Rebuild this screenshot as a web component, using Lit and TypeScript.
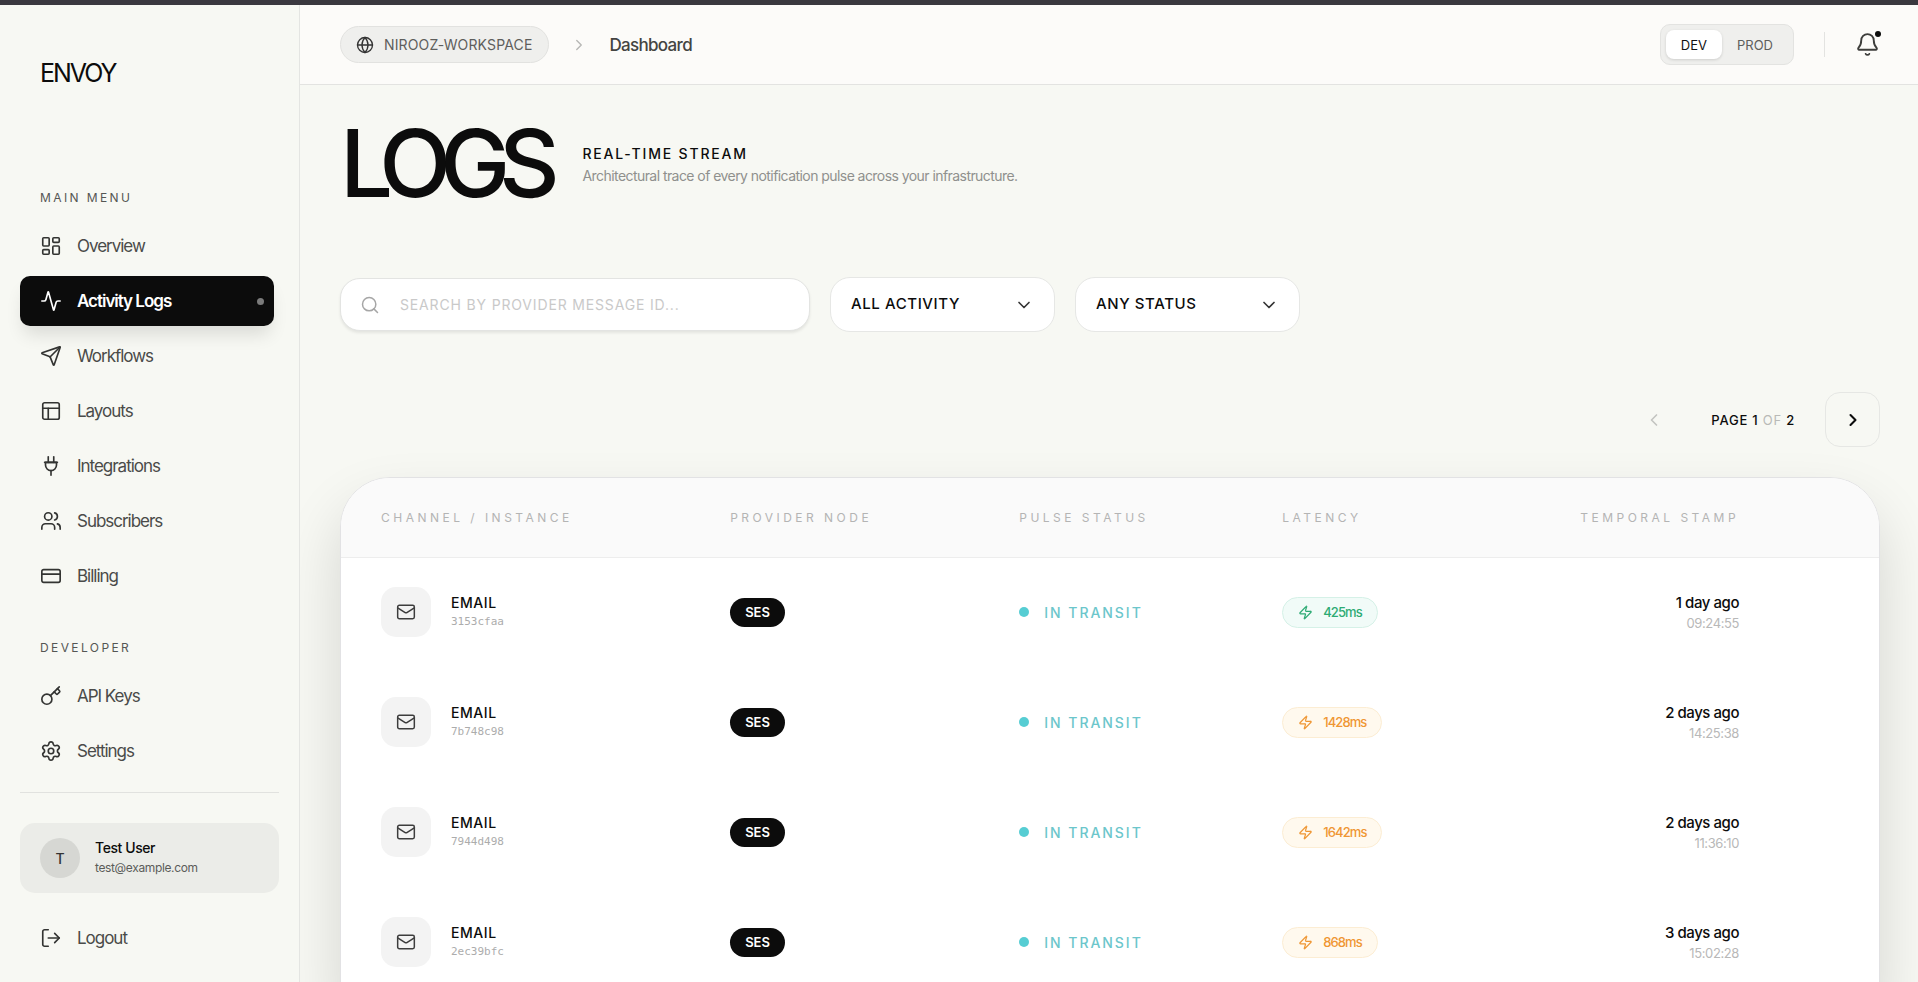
import { LitElement, html, css, svg, type SVGTemplateResult } from "lit";
import { customElement, property, state } from "lit/decorators.js";
import { classMap } from "lit/directives/class-map.js";

const ICONS: Record<string, SVGTemplateResult> = {
  overview: svg`<rect width="7" height="9" x="3" y="3" rx="1"/><rect width="7" height="5" x="14" y="3" rx="1"/><rect width="7" height="9" x="14" y="12" rx="1"/><rect width="7" height="5" x="3" y="16" rx="1"/>`,
  activity: svg`<path d="M22 12h-2.48a2 2 0 0 0-1.93 1.46l-2.35 8.36a.25.25 0 0 1-.48 0L9.24 2.18a.25.25 0 0 0-.48 0l-2.35 8.36A2 2 0 0 1 4.49 12H2"/>`,
  send: svg`<path d="M14.536 21.686a.5.5 0 0 0 .937-.024l6.5-19a.496.496 0 0 0-.635-.635l-19 6.5a.5.5 0 0 0-.024.937l7.93 3.18a2 2 0 0 1 1.112 1.11z"/><path d="m21.854 2.147-10.94 10.939"/>`,
  layout: svg`<rect width="18" height="18" x="3" y="3" rx="2"/><path d="M3 9h18"/><path d="M9 21V9"/>`,
  plug: svg`<path d="M9 2v6"/><path d="M15 2v6"/><path d="M12 17v5"/><path d="M5 8h14"/><path d="M6 11V8h12v3a6 6 0 1 1-12 0Z"/>`,
  users: svg`<path d="M16 21v-2a4 4 0 0 0-4-4H6a4 4 0 0 0-4 4v2"/><path d="M16 3.128a4 4 0 0 1 0 7.744"/><path d="M22 21v-2a4 4 0 0 0-3-3.87"/><circle cx="9" cy="7" r="4"/>`,
  card: svg`<rect width="20" height="14" x="2" y="5" rx="2"/><path d="M2 10h20"/>`,
  key: svg`<path d="m15.5 7.5 2.3 2.3a1 1 0 0 0 1.4 0l2.1-2.1a1 1 0 0 0 0-1.4L19 4"/><path d="m21 2-9.6 9.6"/><circle cx="7.5" cy="15.5" r="5.5"/>`,
  settings: svg`<path d="M9.671 4.136a2.34 2.34 0 0 1 4.659 0 2.34 2.34 0 0 0 3.319 1.915 2.34 2.34 0 0 1 2.33 4.033 2.34 2.34 0 0 0 0 3.831 2.34 2.34 0 0 1-2.33 4.033 2.34 2.34 0 0 0-3.319 1.915 2.34 2.34 0 0 1-4.659 0 2.34 2.34 0 0 0-3.32-1.915 2.34 2.34 0 0 1-2.33-4.033 2.34 2.34 0 0 0 0-3.831A2.34 2.34 0 0 1 6.35 6.051a2.34 2.34 0 0 0 3.319-1.915"/><circle cx="12" cy="12" r="3"/>`,
  logout: svg`<path d="m16 17 5-5-5-5"/><path d="M21 12H9"/><path d="M9 21H5a2 2 0 0 1-2-2V5a2 2 0 0 1 2-2h4"/>`,
  globe: svg`<circle cx="12" cy="12" r="10"/><path d="M12 2a14.5 14.5 0 0 0 0 20 14.5 14.5 0 0 0 0-20"/><path d="M2 12h20"/>`,
  search: svg`<path d="m21 21-4.34-4.34"/><circle cx="11" cy="11" r="8"/>`,
  bell: svg`<path d="M10.268 21a2 2 0 0 0 3.464 0"/><path d="M3.262 15.326A1 1 0 0 0 4 17h16a1 1 0 0 0 .74-1.673C19.41 13.956 18 12.499 18 8A6 6 0 0 0 6 8c0 4.499-1.411 5.956-2.738 7.326"/>`,
  mail: svg`<path d="m22 7-8.991 5.727a2 2 0 0 1-2.009 0L2 7"/><rect x="2" y="4" width="20" height="16" rx="2"/>`,
  zap: svg`<path d="M4 14a1 1 0 0 1-.78-1.63l9.9-10.2a.5.5 0 0 1 .86.46l-1.92 6.02A1 1 0 0 0 13 10h7a1 1 0 0 1 .78 1.63l-9.9 10.2a.5.5 0 0 1-.86-.46l1.92-6.02A1 1 0 0 0 11 14z"/>`,
  left: svg`<path d="m15 18-6-6 6-6"/>`,
  right: svg`<path d="m9 18 6-6-6-6"/>`,
  down: svg`<path d="m6 9 6 6 6-6"/>`,
};

@customElement("ui-icon")
export class UiIcon extends LitElement {
  @property() name = "";
  @property({ type: Number }) size = 22;
  @property({ type: Number }) weight = 1.8;

  static styles = css`
    :host { display: inline-flex; flex: none; }
    svg { display: block; fill: none; stroke: currentColor; stroke-linecap: round; stroke-linejoin: round; }
  `;

  render() {
    return html`<svg viewBox="0 0 24 24" width=${this.size} height=${this.size}
      stroke-width=${this.weight} aria-hidden="true">${ICONS[this.name]}</svg>`;
  }
}

const MAIN_MENU = [
  ["Overview", "overview"],
  ["Activity Logs", "activity"],
  ["Workflows", "send"],
  ["Layouts", "layout"],
  ["Integrations", "plug"],
  ["Subscribers", "users"],
  ["Billing", "card"],
];

const DEV_MENU = [
  ["API Keys", "key"],
  ["Settings", "settings"],
];

@customElement("side-bar")
export class SideBar extends LitElement {
  static styles = css`
    :host {
      display: flex; flex-direction: column; box-sizing: border-box;
      padding: 50px 20px 19px; border-right: 1px solid #e4e5e2; background: #f7f8f3;
    }
    a { color: inherit; text-decoration: none; }
    ul { list-style: none; margin: 0; padding: 0; }
    .brand {
      padding-left: 20px; font-size: 25px; line-height: 36px;
      letter-spacing: -0.08em; color: #0c0c0c;
    }
    nav { flex: 1; padding-right: 5px; }
    .label {
      margin: 0 0 15px; padding-left: 20px; font-size: 12px; line-height: 16px;
      font-weight: 400; letter-spacing: 0.2em; color: #555654;
    }
    .main { margin-top: 99px; }
    .dev { margin-top: 39px; }
    .menu { display: flex; flex-direction: column; gap: 5px; }
    .item {
      display: flex; align-items: center; gap: 15px; height: 50px; padding: 0 10px 0 20px;
      border-radius: 10px; font-size: 17px; letter-spacing: -0.06em; color: #4a4b49;
    }
    .item ui-icon { color: #333432; }
    .active {
      background: #0c0c0c; color: #fff; font-weight: 600;
      box-shadow: 0 12px 18px -4px rgba(0, 0, 0, 0.12);
    }
    .active ui-icon { color: #fff; }
    .dot { width: 7px; height: 7px; margin-left: auto; border-radius: 50%; background: #7b7b7b; }
    .foot { border-top: 1px solid #e1e2df; padding-top: 30px; }
    .user {
      display: flex; align-items: center; gap: 15px; height: 70px; padding: 0 20px;
      margin-bottom: 20px; border-radius: 15px; background: #ebece8;
    }
    .avatar {
      display: grid; place-items: center; width: 40px; height: 40px; flex: none;
      border-radius: 50%; background: #d6d7d3; font-size: 14px; font-weight: 500; color: #333;
    }
    .name { font-size: 14px; line-height: 20px; font-weight: 500; letter-spacing: -0.03em; color: #0c0c0c; }
    .mail { font-size: 12px; line-height: 20px; letter-spacing: -0.03em; color: #5b5c5a; }
  `;

  private items(list: string[][]) {
    return html`<ul class="menu">${list.map(([text, icon]) => {
      const active = text === "Activity Logs";
      return html`<li><a href="#" class=${classMap({ item: true, active })}>
        <ui-icon name=${icon}></ui-icon><span>${text}</span>
        ${active ? html`<span class="dot"></span>` : null}
      </a></li>`;
    })}</ul>`;
  }

  render() {
    return html`
      <a class="brand" href="#">ENVOY</a>
      <nav>
        <h2 class="label main">MAIN MENU</h2>
        ${this.items(MAIN_MENU)}
        <h2 class="label dev">DEVELOPER</h2>
        ${this.items(DEV_MENU)}
      </nav>
      <div class="foot">
        <div class="user">
          <span class="avatar">T</span>
          <div>
            <div class="name">Test User</div>
            <div class="mail">test@example.com</div>
          </div>
        </div>
        <a class="item" href="#"><ui-icon name="logout"></ui-icon><span>Logout</span></a>
      </div>
    `;
  }
}

@customElement("top-bar")
export class TopBar extends LitElement {
  @state() private env = "DEV";

  static styles = css`
    :host {
      display: flex; align-items: center; justify-content: space-between; box-sizing: border-box;
      height: 80px; padding: 0 38px 0 40px; border-bottom: 1px solid #e3e3e1; background: #fcfbf9;
    }
    button { font: inherit; border: 0; background: none; padding: 0; cursor: pointer; }
    a { text-decoration: none; }
    .crumbs, .tools { display: flex; align-items: center; }
    .space {
      display: flex; align-items: center; gap: 10px; height: 37px; box-sizing: border-box;
      padding: 0 16px 0 15px; border: 1px solid #e2e2e0; border-radius: 19px; background: #efefed;
      font-size: 14px; letter-spacing: 0.01em; color: #5e5e5c;
    }
    .space ui-icon { color: #333; }
    .sep { margin: 0 21px; color: #b7b7b5; }
    .here { font-size: 17px; font-weight: 500; letter-spacing: -0.04em; color: #444442; }
    .env {
      display: flex; box-sizing: border-box; height: 41px; padding: 5px;
      border: 1px solid #e3e3e1; border-radius: 10px; background: #efefed;
    }
    .env button { padding: 0 15px; border-radius: 8px; font-size: 13px; color: #5e5e5c; }
    .env .on { background: #fff; color: #111; box-shadow: 0 1px 3px rgba(0, 0, 0, 0.14); }
    .line { width: 1px; height: 25px; margin: 0 30px; background: #e3e3e1; }
    .bell { position: relative; display: flex; color: #3d3d3b; }
    .ping { position: absolute; top: -1px; right: -1px; width: 6px; height: 6px; border-radius: 50%; background: #0c0c0c; }
  `;

  render() {
    return html`
      <div class="crumbs">
        <button class="space"><ui-icon name="globe" size="18"></ui-icon>NIROOZ-WORKSPACE</button>
        <ui-icon class="sep" name="right" size="18"></ui-icon>
        <a class="here" href="#">Dashboard</a>
      </div>
      <div class="tools">
        <div class="env" role="group" aria-label="Environment">
          ${["DEV", "PROD"].map((e) => html`<button class=${classMap({ on: this.env === e })}
            aria-pressed=${this.env === e} @click=${() => (this.env = e)}>${e}</button>`)}
        </div>
        <span class="line"></span>
        <button class="bell" aria-label="Notifications"><ui-icon name="bell" size="25"></ui-icon><span class="ping"></span></button>
      </div>
    `;
  }
}

interface Log { id: string; ms: number; ago: string; time: string; }

const LOGS: Log[] = [
  { id: "3153cfaa", ms: 425, ago: "1 day ago", time: "09:24:55" },
  { id: "7b748c98", ms: 1428, ago: "2 days ago", time: "14:25:38" },
  { id: "7944d498", ms: 1642, ago: "2 days ago", time: "11:36:10" },
  { id: "2ec39bfc", ms: 868, ago: "3 days ago", time: "15:02:28" },
];

@customElement("log-table")
export class LogTable extends LitElement {
  static styles = css`
    :host {
      display: block; overflow: hidden; border: 1px solid #e2e2e4; border-radius: 50px 50px 0 0;
      background: #fff; box-shadow: 0 30px 60px rgba(0, 0, 0, 0.14);
    }
    table { width: 100%; border-collapse: collapse; table-layout: fixed; }
    .channel-col { width: 22.7%; }
    .node-col { width: 18.8%; }
    .status-col { width: 17.1%; }
    .latency-col { width: 14%; }
    .more-col { width: 6.5%; }
    th {
      box-sizing: border-box; height: 79px; padding: 0 40px; border-bottom: 1px solid #ededed;
      background: #fafafa; text-align: left; white-space: nowrap;
      font-size: 12px; font-weight: 400; letter-spacing: 0.29em; color: #b4b4b4;
    }
    td { box-sizing: border-box; height: 110px; padding: 0 40px; white-space: nowrap; }
    .end { text-align: right; }
    .channel, .status { display: flex; align-items: center; }
    .channel { gap: 20px; }
    .tile {
      display: grid; place-items: center; width: 50px; height: 50px; flex: none;
      border-radius: 15px; background: #f3f3f3; color: #3d3d3d;
    }
    .kind { font-size: 14px; line-height: 20px; font-weight: 500; letter-spacing: 0.04em; color: #0c0c0c; }
    .id { font: 11px/18px "DejaVu Sans Mono", monospace; color: #acacac; }
    .node {
      display: inline-flex; align-items: center; height: 29px; padding: 0 15px; border-radius: 15px;
      background: #0c0c0c; color: #fff; font-size: 13px; font-weight: 600;
    }
    .status { gap: 15px; font-size: 14px; font-weight: 500; letter-spacing: 0.14em; color: #6cc6cb; }
    .dot { width: 10px; height: 10px; border-radius: 50%; background: #56cdd3; }
    .ms {
      display: inline-flex; align-items: center; gap: 10px; box-sizing: border-box; height: 31px;
      padding: 0 15px; border: 1px solid #fcedd3; border-radius: 16px; background: #fff9ee;
      font-size: 13px; font-weight: 500; letter-spacing: -0.07em; color: #ef9633;
    }
    .fast { border-color: #d5f1e7; background: #f1fbf8; color: #2dab74; }
    .ago { padding-top: 2px; font-size: 15px; line-height: 20px; font-weight: 500; letter-spacing: -0.03em; color: #0c0c0c; }
    .time { font-size: 13px; line-height: 20px; letter-spacing: -0.03em; color: #b8b8b8; }
  `;

  render() {
    return html`
      <table>
        <colgroup>
          <col class="channel-col"><col class="node-col"><col class="status-col">
          <col class="latency-col"><col><col class="more-col">
        </colgroup>
        <thead>
          <tr>
            <th scope="col">CHANNEL / INSTANCE</th>
            <th scope="col">PROVIDER NODE</th>
            <th scope="col">PULSE STATUS</th>
            <th scope="col">LATENCY</th>
            <th scope="col" class="end">TEMPORAL STAMP</th>
            <th></th>
          </tr>
        </thead>
        <tbody>
          ${LOGS.map((log) => html`<tr>
            <td><div class="channel">
              <span class="tile"><ui-icon name="mail" size="20"></ui-icon></span>
              <div><div class="kind">EMAIL</div><div class="id">${log.id}</div></div>
            </div></td>
            <td><span class="node">SES</span></td>
            <td><div class="status"><span class="dot"></span>IN TRANSIT</div></td>
            <td><span class=${classMap({ ms: true, fast: log.ms < 500 })}>
              <ui-icon name="zap" size="15" weight="2"></ui-icon>${log.ms}ms</span></td>
            <td class="end"><div class="ago">${log.ago}</div><div class="time">${log.time}</div></td>
            <td></td>
          </tr>`)}
        </tbody>
      </table>
    `;
  }
}

@customElement("app-root")
export class AppRoot extends LitElement {
  static styles = css`
    :host {
      display: grid; grid-template-columns: 300px minmax(0, 1fr); box-sizing: border-box;
      height: 100vh; overflow: hidden; border-top: 5px solid #3a383f; background: #f7f8f3;
      font-family: Inter, "Liberation Sans", sans-serif; color: #0c0c0c;
    }
    .page { display: flex; flex-direction: column; min-width: 0; min-height: 0; }
    main { flex: 1; min-height: 0; overflow: hidden; padding: 31px 38px 0 40px; }
    .hero { display: flex; align-items: center; gap: 34px; margin-bottom: 67px; }
    h1 { margin: 0; font-size: 94px; line-height: 94px; font-weight: 500; letter-spacing: -0.12em; }
    .intro { padding-top: 4px; }
    .over { font-size: 14px; line-height: 22px; font-weight: 500; letter-spacing: 0.13em; }
    .lead { font-size: 14px; line-height: 22px; letter-spacing: -0.04em; color: #8f908d; }
    p { margin: 0; }
    .filters { display: flex; align-items: center; gap: 20px; margin-bottom: 60px; }
    .search {
      display: flex; align-items: center; gap: 20px; box-sizing: border-box; width: 470px; height: 53px;
      padding: 0 19px; border: 1px solid #e3e4e2; border-radius: 20px; background: #fff;
      color: #a6a6a6; box-shadow: 0 2px 3px rgba(0, 0, 0, 0.08);
    }
    input {
      flex: 1; min-width: 0; border: 0; outline: 0; padding: 0; background: none;
      font: inherit; font-size: 14px; letter-spacing: 0.06em; color: #0c0c0c;
    }
    input::placeholder { color: #c9c9c9; opacity: 1; }
    .pick { display: grid; align-items: center; width: 225px; }
    .pick > * { grid-area: 1 / 1; }
    .pick ui-icon { justify-self: end; margin-right: 21px; pointer-events: none; color: #333; }
    select {
      appearance: none; width: 100%; height: 55px; padding: 0 20px 2px; border: 1px solid #e6e7e5;
      border-radius: 20px; background: #fff; font: inherit; font-size: 15px; font-weight: 500;
      letter-spacing: 0.04em; color: #0c0c0c;
    }
    .pager {
      display: flex; align-items: center; justify-content: flex-end; gap: 30px; margin-bottom: 30px;
      font-size: 13px; font-weight: 500; letter-spacing: 0.06em;
    }
    .pager button {
      display: grid; place-items: center; width: 55px; height: 55px; padding: 0;
      border: 1px solid #e6e7e4; border-radius: 15px; background: none; color: #0c0c0c;
    }
    .pager button:disabled { border-color: transparent; color: #c3c4c1; }
    .of { font-weight: 400; color: #b9bab7; }
  `;

  render() {
    return html`
      <side-bar></side-bar>
      <div class="page">
        <top-bar></top-bar>
        <main>
          <div class="hero">
            <h1>LOGS</h1>
            <div class="intro">
              <p class="over">REAL-TIME STREAM</p>
              <p class="lead">Architectural trace of every notification pulse across your infrastructure.</p>
            </div>
          </div>
          <div class="filters">
            <label class="search">
              <ui-icon name="search" size="20"></ui-icon>
              <input type="text" aria-label="Search by provider message ID" placeholder="SEARCH BY PROVIDER MESSAGE ID...">
            </label>
            <div class="pick">
              <select aria-label="Activity"><option>ALL ACTIVITY</option></select>
              <ui-icon name="down" size="20" weight="2"></ui-icon>
            </div>
            <div class="pick">
              <select aria-label="Status"><option>ANY STATUS</option></select>
              <ui-icon name="down" size="20" weight="2"></ui-icon>
            </div>
          </div>
          <div class="pager">
            <button disabled aria-label="Previous page"><ui-icon name="left" size="20" weight="2"></ui-icon></button>
            <span>PAGE 1 <span class="of">OF</span> 2</span>
            <button aria-label="Next page"><ui-icon name="right" size="20" weight="2.5"></ui-icon></button>
          </div>
          <log-table></log-table>
        </main>
      </div>
    `;
  }
}
